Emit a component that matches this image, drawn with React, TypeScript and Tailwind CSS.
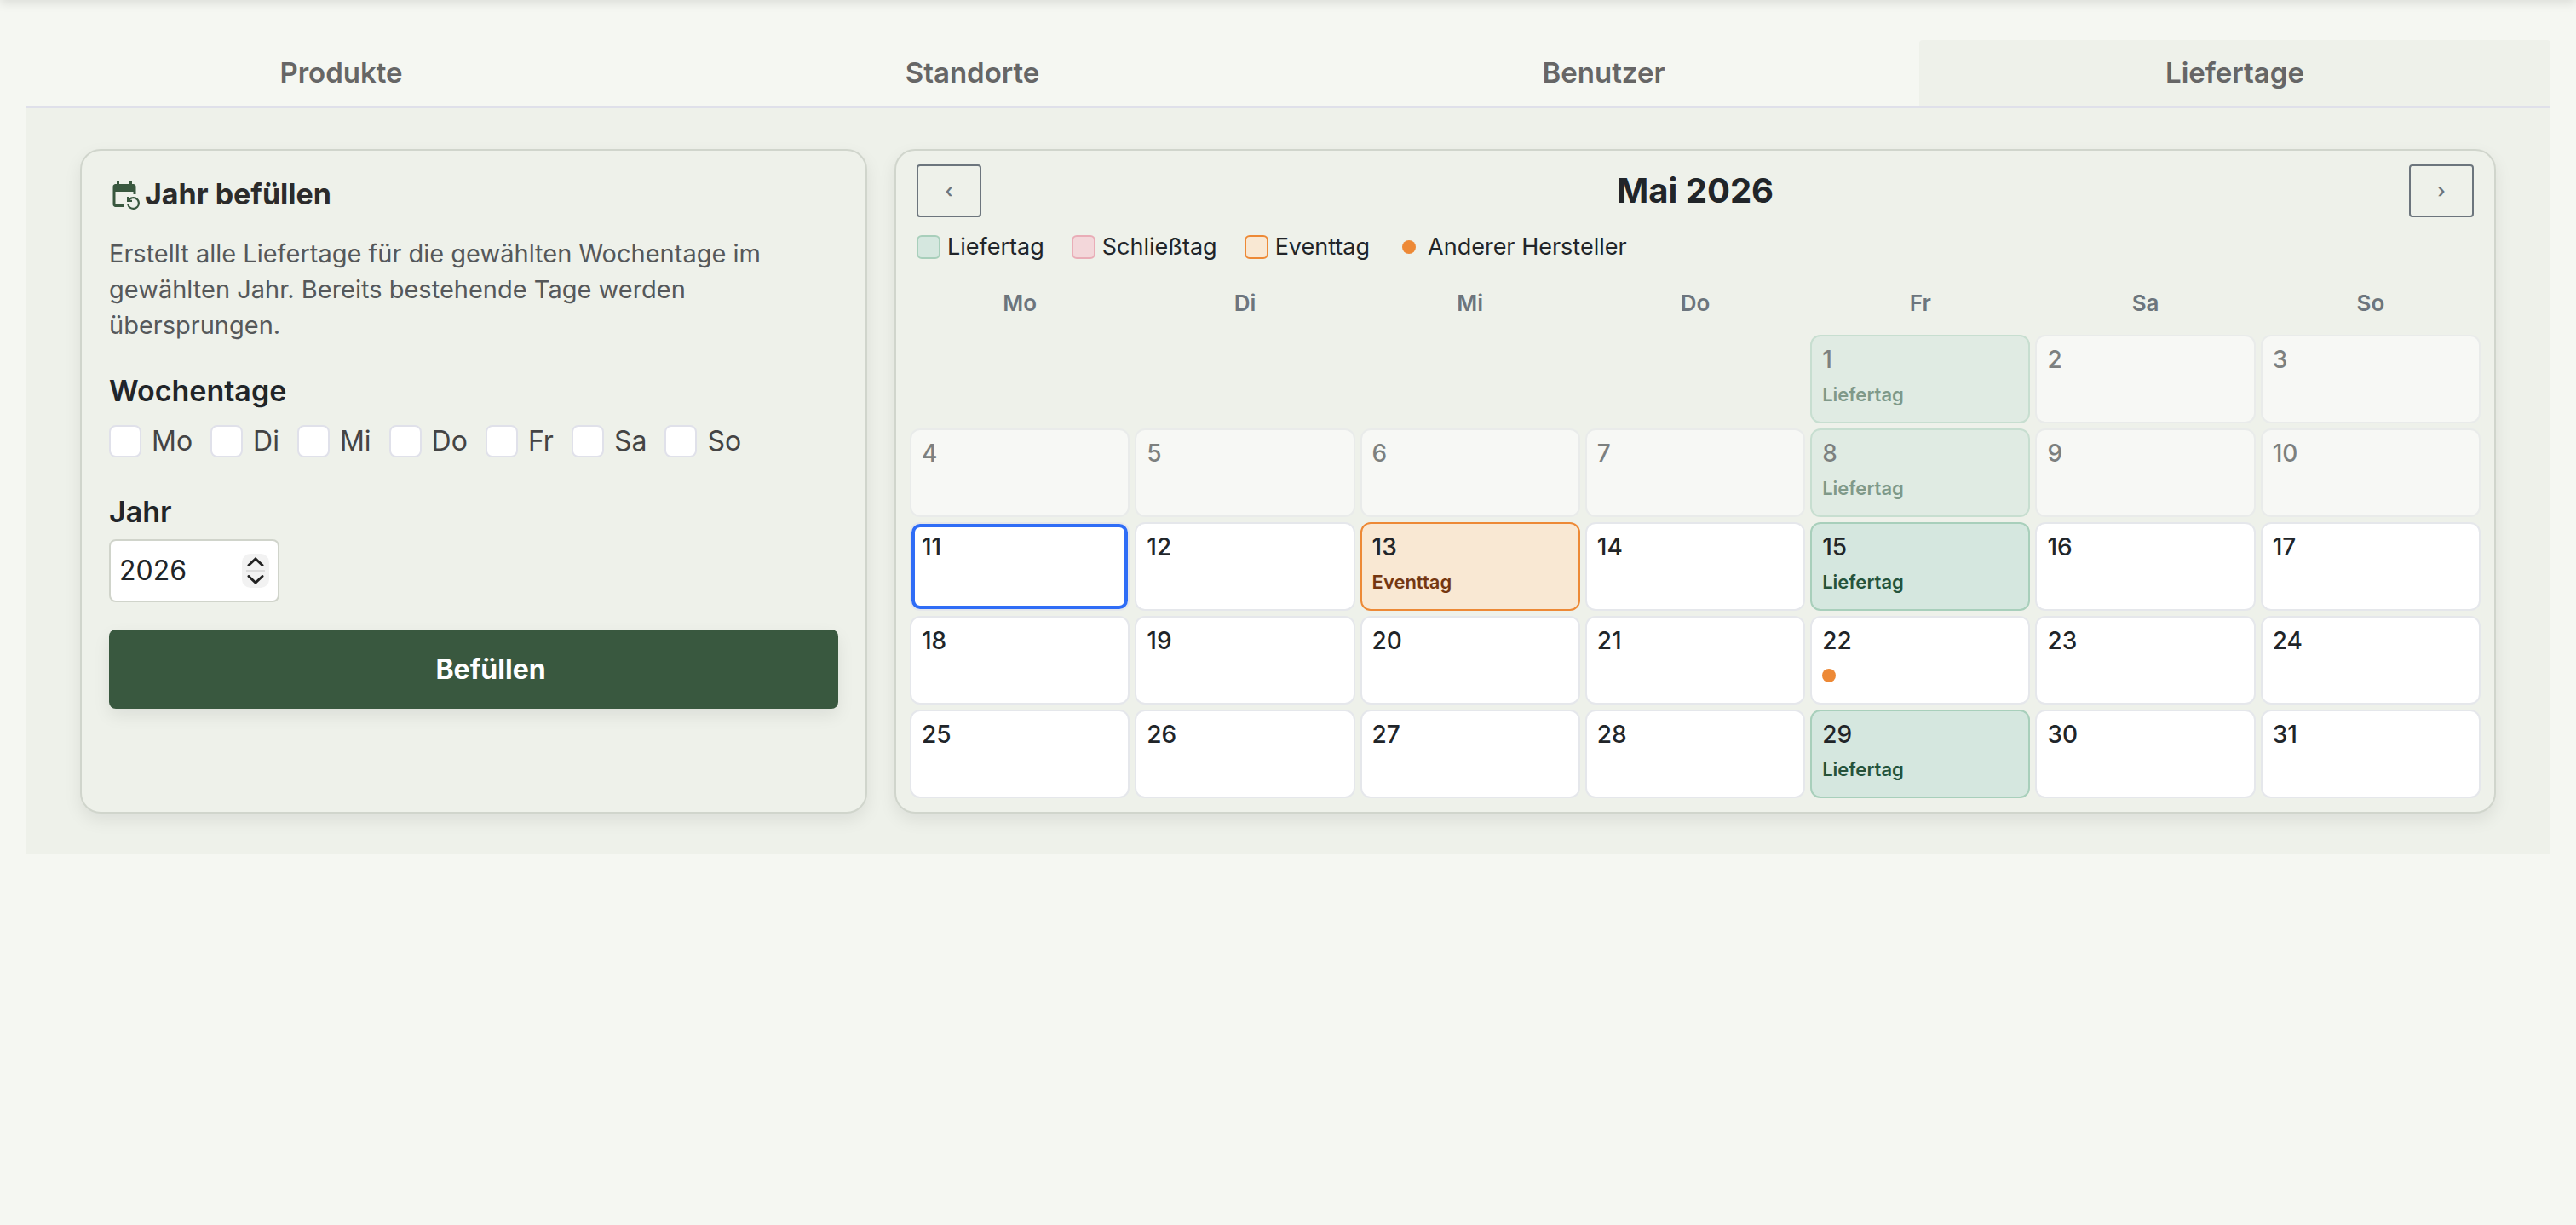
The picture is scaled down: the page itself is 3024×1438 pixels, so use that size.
import { useState } from "react";
import { MdEventRepeat } from "react-icons/md";
import clsx from "clsx";

const TABS = ["Produkte", "Standorte", "Benutzer", "Liefertage"];
const WEEKDAYS = ["Mo", "Di", "Mi", "Do", "Fr", "Sa", "So"];

type DayKind = "delivery" | "event" | "other";

// Mai 2026
const FIRST_WEEKDAY = 4; // Freitag
const DAYS_IN_MONTH = 31;
const TODAY = 11;
const MARKED: Record<number, DayKind> = {
  1: "delivery",
  8: "delivery",
  13: "event",
  15: "delivery",
  22: "other",
  29: "delivery",
};

const LEGEND = [
  { label: "Liefertag", swatch: "size-7 rounded-md border-2 border-[#a8cfbb] bg-[#d5e7df]" },
  { label: "Schließtag", swatch: "size-7 rounded-md border-2 border-[#e9adb7] bg-[#f3d7da]" },
  { label: "Eventtag", swatch: "size-7 rounded-md border-2 border-[#ed8936] bg-[#f9e8d3]" },
  { label: "Anderer Hersteller", swatch: "mx-1.5 size-4 rounded-full bg-[#ed8936]" },
];

const CARD =
  "rounded-3xl border-2 border-[#d0d5cc] bg-[#eef1ea] shadow-[0_8px_20px_rgba(0,0,0,0.08)]";

function Tabs({ active, onSelect }: { active: string; onSelect: (tab: string) => void }) {
  return (
    <nav role="tablist" className="grid grid-cols-4 border-b-2 border-[#dfe0ea] pb-px">
      {TABS.map((tab) => (
        <button
          key={tab}
          role="tab"
          aria-selected={tab === active}
          onClick={() => onSelect(tab)}
          className={clsx(
            "rounded-t py-4 text-[33px] leading-[45px] font-semibold text-[#666]",
            tab === active && "bg-[#eef1ea]"
          )}
        >
          {tab}
        </button>
      ))}
    </nav>
  );
}

function StepButton({ label, path, onClick }: { label: string; path: string; onClick: () => void }) {
  return (
    <button aria-label={label} onClick={onClick} className="flex h-[19px] w-8 items-center justify-center">
      <svg viewBox="0 0 20 11" className="h-[11px] w-5" fill="none" stroke="#222" strokeWidth="3" strokeLinecap="round">
        <path d={path} />
      </svg>
    </button>
  );
}

function FillYearCard() {
  const [year, setYear] = useState(2026);

  return (
    <section className={clsx(CARD, "p-8")}>
      <h2 className="flex items-center gap-1.5 text-[34px] leading-[38px] font-bold text-[#2b2b2b]">
        <MdEventRepeat className="size-9 text-[#39583f]" />
        Jahr befüllen
      </h2>
      <p className="mt-[30px] text-[29px] leading-[42px] text-[#55585a]">
        Erstellt alle Liefertage für die gewählten Wochentage im gewählten Jahr. Bereits bestehende
        Tage werden übersprungen.
      </p>

      <fieldset className="mt-8">
        <legend className="text-[34px] leading-[48px] font-semibold text-[#212529]">Wochentage</legend>
        <div className="mt-4 flex flex-wrap gap-[21px]">
          {WEEKDAYS.map((day) => (
            <label key={day} className="flex items-center gap-3 text-[32px] leading-[38px] text-[#444]">
              <input
                type="checkbox"
                className="size-[38px] appearance-none rounded-lg border-2 border-[#e0e1ea] bg-white checked:bg-[#39583f]"
              />
              {day}
            </label>
          ))}
        </div>
      </fieldset>

      <label htmlFor="year" className="mt-10 block text-[34px] leading-[48px] font-semibold text-[#212529]">
        Jahr
      </label>
      <div className="mt-2 flex h-[74px] w-[200px] items-center rounded-lg border-2 border-[#d0d4cb] bg-white px-2.5">
        <input
          id="year"
          type="number"
          value={year}
          onChange={(e) => setYear(Number(e.target.value))}
          className="w-full min-w-0 [appearance:textfield] text-[32px] leading-[48px] text-[#212529] outline-none [&::-webkit-inner-spin-button]:appearance-none"
        />
        <div className="flex shrink-0 flex-col items-center rounded-[10px] bg-[#f2f2f2]">
          <StepButton label="Jahr erhöhen" path="M2 9.5 10 2l8 7.5" onClick={() => setYear(year + 1)} />
          <span className="h-0.5 w-[22px] bg-[#dcdcdc]" />
          <StepButton label="Jahr verringern" path="M2 1.5 10 9l8-7.5" onClick={() => setYear(year - 1)} />
        </div>
      </div>

      <button className="mt-8 w-full rounded-lg bg-[#39583f] py-6 pl-10 text-[32px] leading-[45px] font-bold text-white shadow-[0_8px_20px_rgba(0,0,0,0.08)]">
        Befüllen
      </button>
    </section>
  );
}

function DayCell({ day }: { day: number }) {
  const kind = MARKED[day];

  return (
    <button
      className={clsx(
        "flex h-[104px] flex-col items-start gap-1.5 rounded-xl border-2 px-3 pt-1.5",
        kind === "delivery" && "border-[#a8cfbb] bg-[#d5e7df]",
        kind === "event" && "border-[#ed8936] bg-[#f9e8d3]",
        kind !== "delivery" && kind !== "event" && "border-[#e5e7eb] bg-white",
        day < TODAY && "opacity-55",
        day === TODAY && "outline-4 -outline-offset-6 outline-[#2f6df6]"
      )}
    >
      <span className="text-[28px] leading-[42px] font-medium text-[#212529]">{day}</span>
      <span className="flex h-7 items-center text-[22px] leading-[28px] font-semibold">
        {kind === "delivery" && <span className="text-[#25533b]">Liefertag</span>}
        {kind === "event" && <span className="text-[#743711]">Eventtag</span>}
        {kind === "other" && <span className="size-4 rounded-full bg-[#ed8936]" />}
      </span>
    </button>
  );
}

function MonthButton({ label, children }: { label: string; children: string }) {
  return (
    <button
      aria-label={label}
      className="h-[62px] w-[76px] rounded border-2 border-[#6c757d] text-[22px] leading-[38px] font-semibold text-[#6c757d]"
    >
      {children}
    </button>
  );
}

function CalendarCard() {
  const days = Array.from({ length: DAYS_IN_MONTH }, (_, i) => i + 1);

  return (
    <section className={clsx(CARD, "col-span-2 p-4")}>
      <header className="flex items-center justify-between px-2">
        <MonthButton label="Vorheriger Monat">‹</MonthButton>
        <h2 className="text-[40px] leading-[48px] font-bold text-[#212529]">Mai 2026</h2>
        <MonthButton label="Nächster Monat">›</MonthButton>
      </header>

      <ul className="mt-5 flex flex-wrap gap-8 px-2 text-[27px] leading-[30px] text-[#212529]">
        {LEGEND.map(({ label, swatch }) => (
          <li key={label} className="flex items-center gap-2">
            <span className={swatch} />
            {label}
          </li>
        ))}
      </ul>

      <div className="mt-8 grid grid-cols-7 gap-x-1.5 text-center text-[26px] leading-[38px] font-semibold text-[#6c757d]">
        {WEEKDAYS.map((day) => (
          <span key={day}>{day}</span>
        ))}
      </div>

      <div className="mt-[18px] grid grid-cols-7 gap-1.5">
        {/* Leere Felder vor dem Monatsersten */}
        {Array.from({ length: FIRST_WEEKDAY }, (_, i) => (
          <span key={`blank-${i}`} />
        ))}
        {days.map((day) => (
          <DayCell key={day} day={day} />
        ))}
      </div>
    </section>
  );
}

export default function App() {
  const [tab, setTab] = useState("Liefertage");

  return (
    <div className="relative min-h-screen bg-[#f5f7f2] font-['Inter',sans-serif]">
      {/* Schatten der Kopfleiste */}
      <div className="absolute inset-x-0 -top-6 h-6 shadow-[0_4px_12px_rgba(0,0,0,0.1)]" />
      <main className="px-[30px] pt-[47px]">
        <Tabs active={tab} onSelect={setTab} />
        <div role="tabpanel" className="grid grid-cols-3 gap-8 bg-[#eef1ea] px-16 py-12">
          <FillYearCard />
          <CalendarCard />
        </div>
      </main>
    </div>
  );
}
